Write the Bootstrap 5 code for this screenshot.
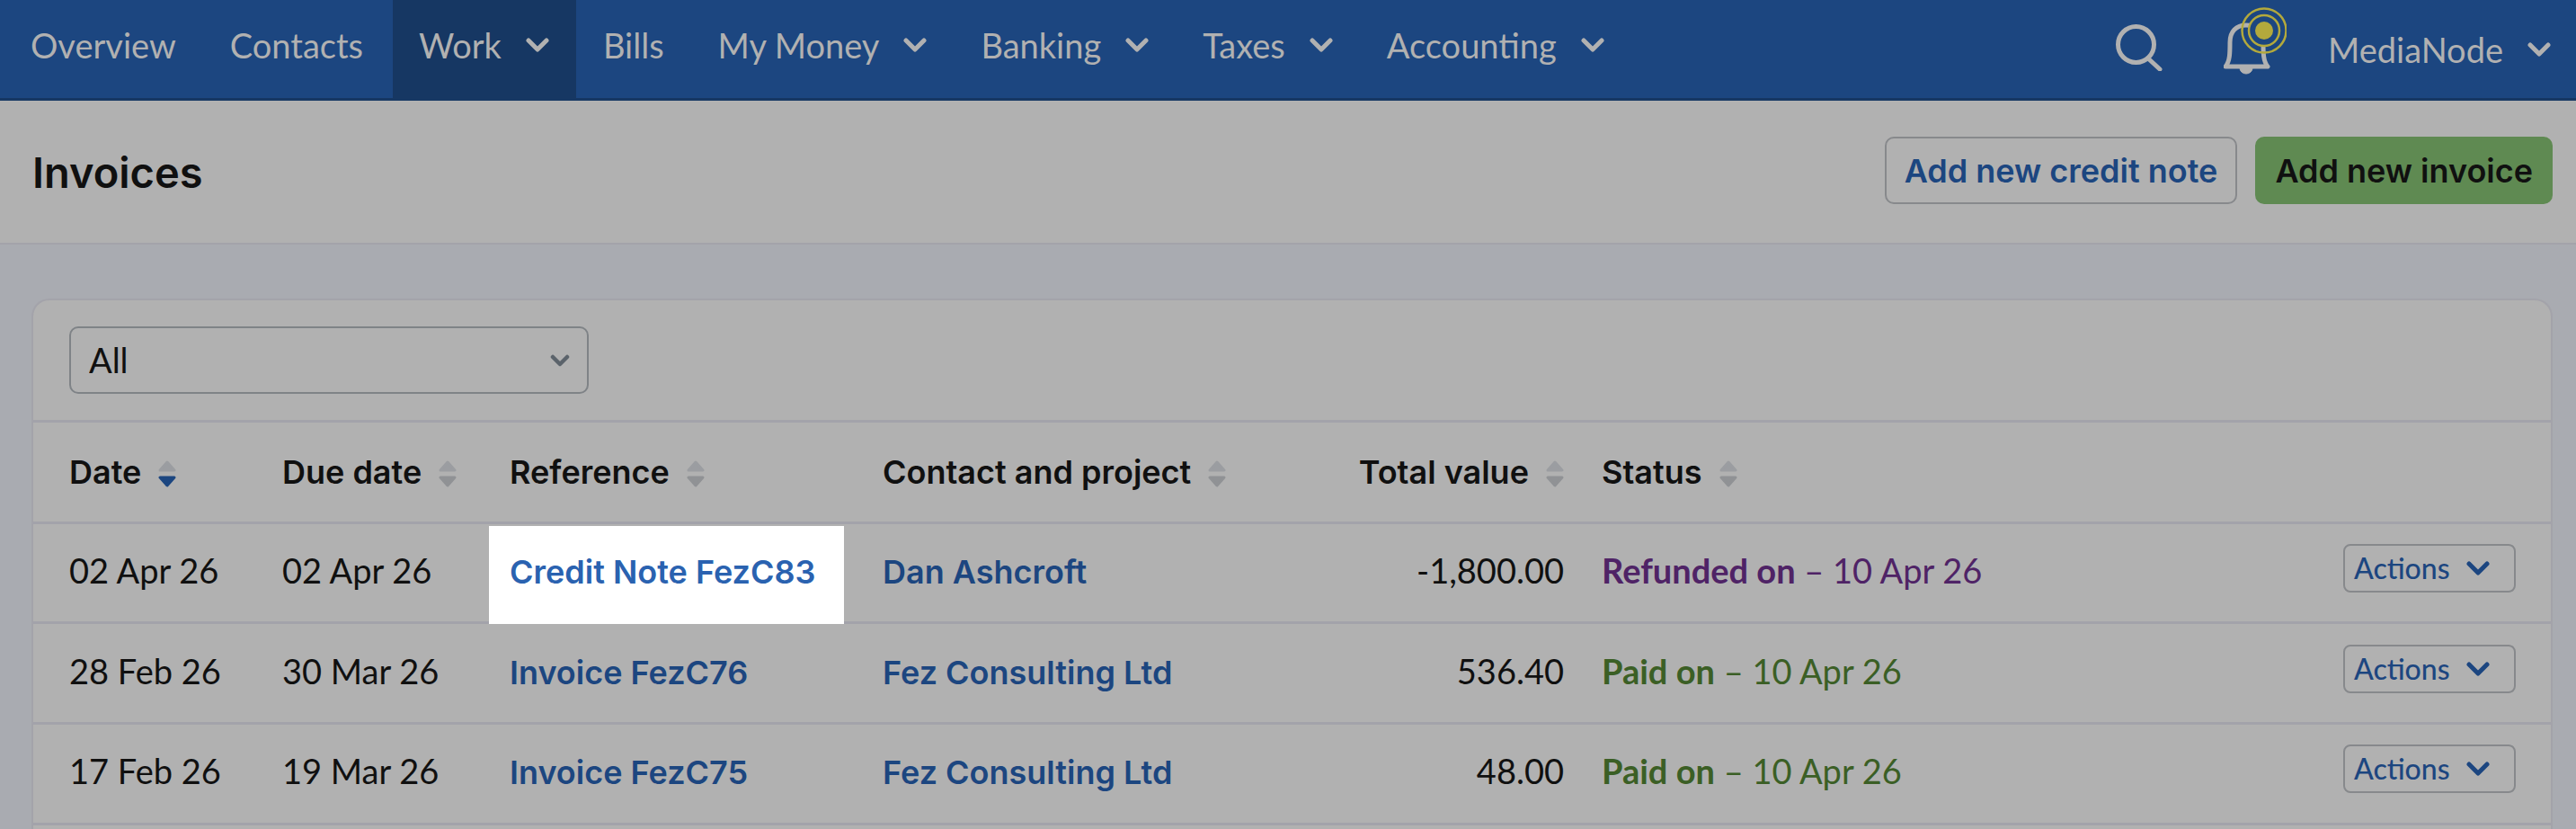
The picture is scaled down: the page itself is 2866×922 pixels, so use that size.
<!DOCTYPE html>
<html lang="en">
<head>
  <meta charset="UTF-8" />
  <title>Invoices</title>
  <link rel="stylesheet" href="https://cdn.jsdelivr.net/npm/bootstrap@5.3.3/dist/css/bootstrap.min.css">
  <style>
    :root {
      --nav-bg: #1c4680;
      --nav-dark: #163763;
      --dim: #b1b1b1;
      --page-bg: #a9abb1;
      --line: #a3a3aa;
      --ink: #101010;
      --link-blue: #1c4680;
    }

    html, body {
      height: 922px;
      overflow: hidden;
    }

    body {
      background: var(--page-bg);
      font-family: "Lato", "Liberation Sans", sans-serif;
      font-size: 38px;
      color: var(--ink);
    }

    .top-bar {
      height: 112px;
      background: var(--nav-bg);
      border-bottom: 3px solid var(--nav-dark);
      padding: 0;
    }

    .top-link {
      display: flex;
      align-items: center;
      gap: 27px;
      height: 109px;
      padding: 0 30px 10px;
      color: var(--dim);
      font-size: 38px;
      line-height: 1;
      text-decoration: none;
    }

    .top-link.current {
      background: var(--nav-dark);
      margin-left: 3px;
      padding-left: 29px;
      padding-right: 30px;
      height: 112px;
      padding-bottom: 13px;
    }

    .chev-nav {
      width: 26px;
      height: 16px;
      flex: none;
      fill: none;
      stroke: currentColor;
      stroke-width: 5;
      stroke-linecap: round;
      stroke-linejoin: round;
    }

    .left-links {
      padding-left: 4px;
    }

    .right-tools {
      height: 109px;
      padding-right: 28px;
    }

    .tool-icon {
      flex: none;
      fill: none;
      stroke: var(--dim);
      stroke-width: 5;
      stroke-linecap: round;
      stroke-linejoin: round;
    }

    .tool-search {
      margin: -4px 68px 0 0;
    }

    .tool-bell {
      margin: -19px 46px 0 0;
    }

    .page-head {
      height: 160px;
      background: var(--dim);
      border-bottom: 2px solid var(--line);
      padding: 40px 26px 0 36px;
    }

    .page-title {
      font-family: "Inter", "Liberation Sans", sans-serif;
      font-size: 47px;
      font-weight: 600;
      line-height: 1;
      margin: 16px 0 0;
    }

    .btn-head {
      height: 75px;
      padding: 0 20px;
      font-family: "Inter", "Liberation Sans", sans-serif;
      font-size: 36px;
      font-weight: 600;
      line-height: 1;
      border-radius: 10px;
      display: flex;
      align-items: center;
    }

    .head-actions {
      gap: 20px;
    }

    .btn-plain {
      color: var(--link-blue);
      background: transparent;
      border: 2px solid #87898c;
    }

    .btn-go {
      color: var(--ink);
      background: #5f8a52;
      border: 2px solid #5f8a52;
    }

    .invoice-card {
      margin: 60px 26px 0 35px;
      height: 590px;
      overflow: hidden;
      background: var(--dim);
      border: 2px solid var(--line);
      border-bottom: 0;
      border-radius: 20px 20px 0 0;
    }

    .filter-row {
      height: 136px;
      padding: 29px 0 0 40px;
      border-bottom: 3px solid var(--line);
    }

    .filter-pick {
      width: 578px;
      height: 75px;
      padding: 0 20px;
      color: var(--ink);
      font-size: 38px;
      background-color: transparent;
      background-image: url("data:image/svg+xml,%3csvg xmlns='http://www.w3.org/2000/svg' viewBox='0 0 22 14'%3e%3cpath fill='none' stroke='%235b636b' stroke-width='4.5' stroke-linecap='round' stroke-linejoin='round' d='M3 3l8 8 8-8'/%3e%3c/svg%3e");
      background-position: right 19px center;
      background-size: 22px 14px;
      border: 2px solid #7f8387;
      border-radius: 10px;
    }

    .invoice-table {
      --bs-table-bg: transparent;
      --bs-table-color: var(--ink);
      table-layout: fixed;
      width: 100%;
      margin: 0;
      font-size: 38px;
    }

    .invoice-table td,
    .invoice-table th {
      height: 111.7px;
      padding: 0 23px 5px;
      vertical-align: middle;
      border-bottom: 3px solid var(--line);
      white-space: nowrap;
    }

    .invoice-table thead th {
      height: 111px;
      padding-bottom: 0;
      font-family: "Inter", "Liberation Sans", sans-serif;
      font-size: 36px;
      font-weight: 600;
    }

    .invoice-table tr > :first-child {
      padding-left: 40px;
    }

    .invoice-table tr > :last-child {
      padding-right: 39px;
      text-align: right;
    }

    .col-date { width: 254px; }
    .col-due { width: 253px; }
    .col-ref { width: 415px; }
    .col-contact { width: 441px; }
    .col-total { width: 359px; }

    .invoice-table .cell-total {
      text-align: right;
      padding-right: 19px;
    }

    .doc-link {
      font-family: "Inter", "Liberation Sans", sans-serif;
      font-size: 36px;
      font-weight: 600;
      color: var(--link-blue);
      text-decoration: none;
    }

    .spot-cell {
      position: relative;
    }

    .spot-cell::before {
      content: "";
      position: absolute;
      top: 2px;
      right: 20px;
      bottom: -3px;
      left: 0;
      background: #fff;
    }

    .spot-cell .doc-link {
      position: relative;
      color: #2a62b0;
    }

    .state-refund { color: #4f2366; }
    .state-paid { color: #3b5f25; }

    .sort-mark {
      display: inline-block;
      vertical-align: -4px;
      margin-left: 10px;
    }

    .btn-actions {
      display: inline-flex;
      align-items: center;
      gap: 18px;
      width: 192px;
      height: 54px;
      margin-bottom: 5px;
      padding: 0 20px 0 10px;
      color: var(--link-blue);
      background: transparent;
      border: 2px solid #87898c;
      border-radius: 8px;
      font-size: 32px;
      font-weight: 500;
      line-height: 1;
    }
  </style>
</head>
<body>
  <!-- top navigation -->
  <nav class="navbar top-bar flex-nowrap justify-content-between align-items-start">
    <div class="d-flex left-links">
      <a class="top-link" href="#">Overview</a>
      <a class="top-link" href="#">Contacts</a>
      <a class="top-link current" href="#">Work <svg class="chev-nav" viewBox="0 0 26 16"><path d="M3 3l10 10L23 3"/></svg></a>
      <a class="top-link" href="#">Bills</a>
      <a class="top-link" href="#">My Money <svg class="chev-nav" viewBox="0 0 26 16"><path d="M3 3l10 10L23 3"/></svg></a>
      <a class="top-link" href="#">Banking <svg class="chev-nav" viewBox="0 0 26 16"><path d="M3 3l10 10L23 3"/></svg></a>
      <a class="top-link" href="#">Taxes <svg class="chev-nav" viewBox="0 0 26 16"><path d="M3 3l10 10L23 3"/></svg></a>
      <a class="top-link" href="#">Accounting <svg class="chev-nav" viewBox="0 0 26 16"><path d="M3 3l10 10L23 3"/></svg></a>
    </div>
    <div class="d-flex align-items-center right-tools">
      <svg class="tool-icon tool-search" width="52" height="52" viewBox="0 0 52 52"><circle cx="22.5" cy="22.5" r="20"/><path d="M36 38l13 12"/></svg>
      <svg class="tool-icon tool-bell" width="70" height="76" viewBox="0 0 70 76">
        <path d="M2 67c5-6 5-15 5-27 0-12 7-19 18-19s19 7 19 19c0 12 0 21 5 27z"/>
        <path d="M18 69a7 6 0 0 0 14 0z" fill="#b1b1b1" stroke-width="1"/>
        <circle cx="45" cy="27" r="17" fill="#1c4680" stroke="#b3a93c" stroke-width="2.5"/>
        <circle cx="45" cy="27" r="24.5" stroke="#b3a93c" stroke-width="2.5"/>
        <circle cx="45" cy="27" r="10" fill="#b3a93c" stroke="none"/>
      </svg>
      <a class="top-link p-0 pb-0" href="#">MediaNode <svg class="chev-nav" viewBox="0 0 26 16"><path d="M3 3l10 10L23 3"/></svg></a>
    </div>
  </nav>

  <div class="page-head d-flex justify-content-between align-items-start">
    <h1 class="page-title">Invoices</h1>
    <div class="d-flex head-actions">
      <a class="btn btn-head btn-plain" href="#">Add new credit note</a>
      <a class="btn btn-head btn-go" href="#">Add new invoice</a>
    </div>
  </div>

  <div class="invoice-card">
    <div class="filter-row">
      <select class="form-select filter-pick">
        <option>All</option>
      </select>
    </div>
    <table class="table invoice-table">
      <colgroup>
        <col class="col-date"><col class="col-due"><col class="col-ref"><col class="col-contact"><col class="col-total"><col>
      </colgroup>
      <thead>
        <tr>
          <th>Date <svg class="sort-mark" width="20" height="30" viewBox="0 0 20 30"><path d="M10 2l8 9H2z" fill="#9b9da1" stroke="#9b9da1" stroke-width="3" stroke-linejoin="round"/><path d="M2 19h16l-8 9z" fill="#1c4680" stroke="#1c4680" stroke-width="3" stroke-linejoin="round"/></svg></th>
          <th>Due date <svg class="sort-mark" width="20" height="30" viewBox="0 0 20 30"><path d="M10 2l8 9H2z" fill="#9b9da1" stroke="#9b9da1" stroke-width="3" stroke-linejoin="round"/><path d="M2 19h16l-8 9z" fill="#909295" stroke="#909295" stroke-width="3" stroke-linejoin="round"/></svg></th>
          <th>Reference <svg class="sort-mark" width="20" height="30" viewBox="0 0 20 30"><path d="M10 2l8 9H2z" fill="#9b9da1" stroke="#9b9da1" stroke-width="3" stroke-linejoin="round"/><path d="M2 19h16l-8 9z" fill="#909295" stroke="#909295" stroke-width="3" stroke-linejoin="round"/></svg></th>
          <th>Contact and project <svg class="sort-mark" width="20" height="30" viewBox="0 0 20 30"><path d="M10 2l8 9H2z" fill="#9b9da1" stroke="#9b9da1" stroke-width="3" stroke-linejoin="round"/><path d="M2 19h16l-8 9z" fill="#909295" stroke="#909295" stroke-width="3" stroke-linejoin="round"/></svg></th>
          <th class="cell-total">Total value <svg class="sort-mark" width="20" height="30" viewBox="0 0 20 30"><path d="M10 2l8 9H2z" fill="#9b9da1" stroke="#9b9da1" stroke-width="3" stroke-linejoin="round"/><path d="M2 19h16l-8 9z" fill="#909295" stroke="#909295" stroke-width="3" stroke-linejoin="round"/></svg></th>
          <th class="text-start">Status <svg class="sort-mark" width="20" height="30" viewBox="0 0 20 30"><path d="M10 2l8 9H2z" fill="#9b9da1" stroke="#9b9da1" stroke-width="3" stroke-linejoin="round"/><path d="M2 19h16l-8 9z" fill="#909295" stroke="#909295" stroke-width="3" stroke-linejoin="round"/></svg></th>
        </tr>
      </thead>
      <tbody>
        <tr>
          <td>02 Apr 26</td>
          <td>02 Apr 26</td>
          <td class="spot-cell"><a class="doc-link" href="#">Credit Note FezC83</a></td>
          <td><a class="doc-link" href="#">Dan Ashcroft</a></td>
          <td class="cell-total">-1,800.00</td>
          <td>
            <div class="d-flex justify-content-between align-items-center">
              <span class="state-refund"><span class="fw-bold">Refunded on</span> – 10 Apr 26</span>
              <button class="btn-actions" type="button">Actions <svg class="chev-nav" viewBox="0 0 26 16"><path d="M3 3l10 10L23 3"/></svg></button>
            </div>
          </td>
        </tr>
        <tr>
          <td>28 Feb 26</td>
          <td>30 Mar 26</td>
          <td><a class="doc-link" href="#">Invoice FezC76</a></td>
          <td><a class="doc-link" href="#">Fez Consulting Ltd</a></td>
          <td class="cell-total">536.40</td>
          <td>
            <div class="d-flex justify-content-between align-items-center">
              <span class="state-paid"><span class="fw-bold">Paid on</span> – 10 Apr 26</span>
              <button class="btn-actions" type="button">Actions <svg class="chev-nav" viewBox="0 0 26 16"><path d="M3 3l10 10L23 3"/></svg></button>
            </div>
          </td>
        </tr>
        <tr>
          <td>17 Feb 26</td>
          <td>19 Mar 26</td>
          <td><a class="doc-link" href="#">Invoice FezC75</a></td>
          <td><a class="doc-link" href="#">Fez Consulting Ltd</a></td>
          <td class="cell-total">48.00</td>
          <td>
            <div class="d-flex justify-content-between align-items-center">
              <span class="state-paid"><span class="fw-bold">Paid on</span> – 10 Apr 26</span>
              <button class="btn-actions" type="button">Actions <svg class="chev-nav" viewBox="0 0 26 16"><path d="M3 3l10 10L23 3"/></svg></button>
            </div>
          </td>
        </tr>
      </tbody>
    </table>
  </div>

  <script src="https://cdn.jsdelivr.net/npm/bootstrap@5.3.3/dist/js/bootstrap.bundle.min.js"></script>
</body>
</html>
